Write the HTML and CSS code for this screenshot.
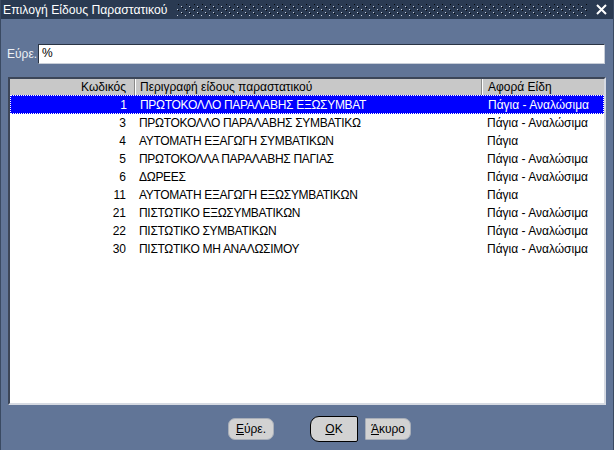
FILE: index.html
```html
<!DOCTYPE html>
<html lang="el">

<head>
    <meta charset="UTF-8">
    <link rel="stylesheet" href="styles.css">
    <title>Επιλογή Είδους Παραστατικού</title>
</head>

<body>
    <div class="window">
        <div class="titlebar">
            <span class="title">Επιλογή Είδους Παραστατικού</span>
            <svg class="dots" height="14">
                <defs>
                    <pattern id="grip" width="8" height="6" patternUnits="userSpaceOnUse">
                        <rect x="0" y="0" width="1" height="1" fill="#c9d0dc"/>
                        <rect x="1" y="1" width="1" height="1" fill="#05080d"/>
                        <rect x="4" y="3" width="1" height="1" fill="#c9d0dc"/>
                        <rect x="5" y="4" width="1" height="1" fill="#05080d"/>
                    </pattern>
                </defs>
                <rect x="0" y="1" width="100%" height="12" fill="url(#grip)"/>
            </svg>
            <svg class="close" width="11" height="11" viewBox="0 0 11 11">
                <path d="M1 1 L10 10 M10 1 L1 10" stroke="#fff" stroke-width="2"/>
            </svg>
        </div>

        <div class="search">
            <label class="search-label">Εύρε.</label>
            <div class="search-input">%</div>
        </div>

        <div class="grid">
            <div class="grid-row grid-head">
                <div class="cell code">Κωδικός</div>
                <div class="cell desc">Περιγραφή είδους παραστατικού</div>
                <div class="cell kind">Αφορά Είδη</div>
            </div>
            <div class="grid-row selected">
                <div class="cell code">1</div>
                <div class="cell desc">ΠΡΩΤΟΚΟΛΛΟ ΠΑΡΑΛΑΒΗΣ ΕΞΩΣΥΜΒΑΤ</div>
                <div class="cell kind">Πάγια - Αναλώσιμα</div>
            </div>
            <div class="grid-row">
                <div class="cell code">3</div>
                <div class="cell desc">ΠΡΩΤΟΚΟΛΛΟ ΠΑΡΑΛΑΒΗΣ ΣΥΜΒΑΤΙΚΩ</div>
                <div class="cell kind">Πάγια - Αναλώσιμα</div>
            </div>
            <div class="grid-row">
                <div class="cell code">4</div>
                <div class="cell desc">ΑΥΤΟΜΑΤΗ ΕΞΑΓΩΓΗ ΣΥΜΒΑΤΙΚΩΝ</div>
                <div class="cell kind">Πάγια</div>
            </div>
            <div class="grid-row">
                <div class="cell code">5</div>
                <div class="cell desc">ΠΡΩΤΟΚΟΛΛΑ ΠΑΡΑΛΑΒΗΣ ΠΑΓΙΑΣ</div>
                <div class="cell kind">Πάγια - Αναλώσιμα</div>
            </div>
            <div class="grid-row">
                <div class="cell code">6</div>
                <div class="cell desc">ΔΩΡΕΕΣ</div>
                <div class="cell kind">Πάγια - Αναλώσιμα</div>
            </div>
            <div class="grid-row">
                <div class="cell code">11</div>
                <div class="cell desc">ΑΥΤΟΜΑΤΗ ΕΞΑΓΩΓΗ ΕΞΩΣΥΜΒΑΤΙΚΩΝ</div>
                <div class="cell kind">Πάγια</div>
            </div>
            <div class="grid-row">
                <div class="cell code">21</div>
                <div class="cell desc">ΠΙΣΤΩΤΙΚΟ ΕΞΩΣΥΜΒΑΤΙΚΩΝ</div>
                <div class="cell kind">Πάγια - Αναλώσιμα</div>
            </div>
            <div class="grid-row">
                <div class="cell code">22</div>
                <div class="cell desc">ΠΙΣΤΩΤΙΚΟ ΣΥΜΒΑΤΙΚΩΝ</div>
                <div class="cell kind">Πάγια - Αναλώσιμα</div>
            </div>
            <div class="grid-row">
                <div class="cell code">30</div>
                <div class="cell desc">ΠΙΣΤΩΤΙΚΟ ΜΗ ΑΝΑΛΩΣΙΜΟΥ</div>
                <div class="cell kind">Πάγια - Αναλώσιμα</div>
            </div>
        </div>

        <div class="buttons">
            <button class="btn btn-find"><u>Ε</u>ύρε.</button>
            <div class="pair">
                <button class="btn btn-ok"><u>O</u>K</button>
                <button class="btn btn-cancel"><u>Ά</u>κυρο</button>
            </div>
        </div>
    </div>
</body>

</html>
```

FILE: styles.css
```css
body {
    margin: 0;
    padding: 0;
    font-family: "Liberation Sans", Arial, sans-serif;
    font-size: 12px;
}

.window {
    width: 614px;
    height: 450px;
    box-sizing: border-box;
    background-color: #617597;
    border-left: 1px solid #3a4a62;
    border-right: 1px solid #3a4a62;
    overflow: hidden;
}

.titlebar {
    display: flex;
    align-items: center;
    height: 19px;
    background-color: #2a3a52;
    color: #fff;
    padding-left: 2px;
    padding-right: 6px;
}

.title {
    font-size: 12.2px;
    white-space: nowrap;
}

.dots {
    flex: 1;
    margin-left: 10px;
    margin-right: 8px;
}

.close {
    flex-shrink: 0;
}

.search {
    display: flex;
    align-items: center;
    margin-top: 25px;
    padding-left: 6px;
}

.search-label {
    color: #eef1f5;
    width: 31px;
}

.search-input {
    box-sizing: border-box;
    width: 567px;
    height: 20px;
    line-height: 17px;
    padding-left: 3px;
    background-color: #fff;
    border-top: 1px solid #2a3444;
    border-left: 1px solid #2a3444;
    border-right: 1px solid #c8ced8;
    border-bottom: 1px solid #c8ced8;
}

.grid {
    box-sizing: border-box;
    width: 598px;
    height: 328px;
    margin-top: 13px;
    margin-left: 7px;
    background-color: #fff;
    border-top: 2px solid #3c4658;
    border-left: 2px solid #3c4658;
    border-right: 2px solid #d6dae2;
    border-bottom: 2px solid #d6dae2;
}

.grid-row {
    display: grid;
    grid-template-columns: 124px 347px 1fr;
    height: 18px;
    line-height: 18px;
    box-sizing: border-box;
}

.grid-head {
    height: 16px;
    line-height: 16px;
    background-color: #c8c8c8;
}

.grid-head .desc,
.grid-head .kind {
    border-left: 1px solid #8a8a8a;
    box-shadow: inset 1px 0 #fff;
}

.cell {
    white-space: nowrap;
    overflow: hidden;
}

.code {
    text-align: right;
    padding-right: 8px;
}

.desc {
    padding-left: 5px;
}

.grid-row:not(.grid-head) .desc {
    letter-spacing: -0.3px;
}

.kind {
    padding-left: 6px;
}

.selected {
    height: 19px;
    background-color: #0000ff;
    color: #fff;
    border: 1px dotted #fff;
    line-height: 19px;
}

.buttons {
    display: flex;
    align-items: center;
    margin-top: 11px;
    padding-left: 227px;
    height: 26px;
}

.btn {
    font-family: "Liberation Sans", Arial, sans-serif;
    font-size: 12px;
    color: #000;
    background-color: #d2d2d2;
    border: 1px solid #a8aeb8;
    padding: 0;
    height: 22px;
}

.btn-find {
    width: 46px;
    border-radius: 7px;
}

.pair {
    display: flex;
    align-items: center;
    margin-left: 36px;
}

.btn-ok {
    width: 48px;
    height: 26px;
    border: 1px solid #000;
    border-radius: 9px 2px 2px 9px;
}

.btn-cancel {
    width: 46px;
    margin-left: 7px;
    border-radius: 1px 7px 7px 1px;
}
```
